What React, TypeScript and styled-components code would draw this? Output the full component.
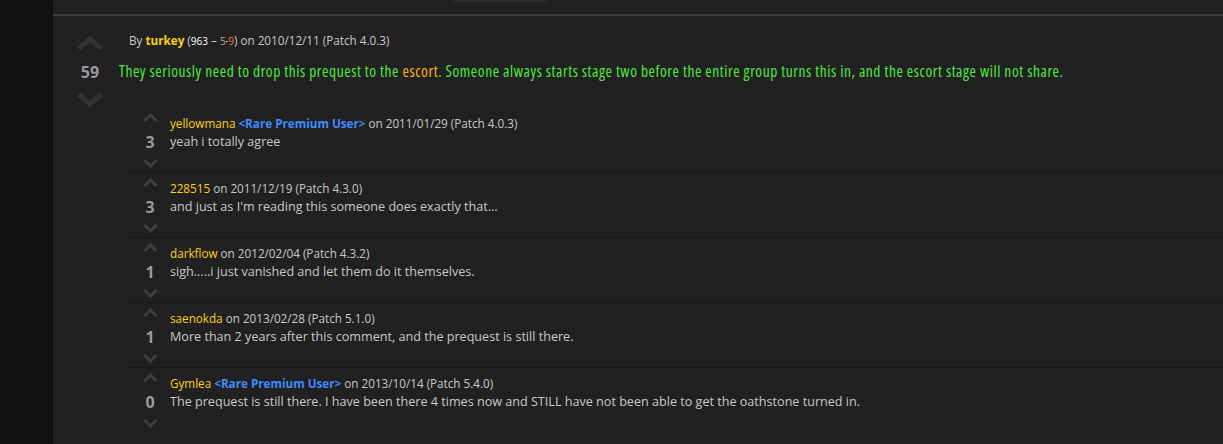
import React from "react";
import styled, { createGlobalStyle } from "styled-components";

const Global = createGlobalStyle`
  html, body { margin: 0; padding: 0; background: #212121; }
  body { font-family: "Open Sans", "Liberation Sans", sans-serif; }
  * { box-sizing: border-box; }
`;

const Page = styled.div`
  display: flex;
  width: 1223px;
  height: 444px;
  overflow: hidden;
`;

const SideStrip = styled.div`
  width: 53px;
  flex: none;
  background: #111111;
`;

const Main = styled.div`
  flex: 1;
  display: flex;
  flex-direction: column;
  background: #212121;
`;

const TopBar = styled.div`
  height: 16px;
  border-bottom: 2px solid #3e3e3e;
  padding-left: 400px;
`;

const TopTab = styled.div`
  width: 94px;
  height: 2px;
  background: #2b2b2b;
  border-radius: 0 0 3px 3px;
`;

const Comment = styled.div`
  display: grid;
  grid-template-columns: 66px 1fr;
  padding-top: 20px;
`;

const VoteCol = styled.div`
  display: flex;
  flex-direction: column;
  align-items: center;
  padding-left: 8px;
`;

const Score = styled.div<{ $big?: boolean }>`
  font-family: "Open Sans", sans-serif;
  font-weight: 700;
  color: #9a9a9a;
  font-size: 16px;
  line-height: 18px;
  margin: ${(p) => (p.$big ? "13px 0 12px" : "11px 0 8px")};
`;

const Chevron: React.FC<{ dir: "up" | "down"; big?: boolean }> = ({ dir, big }) => {
  const w = big ? 26 : 15;
  const h = big ? 14 : 9;
  const sw = big ? 5 : 3;
  const pts =
    dir === "up"
      ? `${sw / 2 + 1},${h - sw / 2 - 0.5} ${w / 2},${sw / 2 + 0.5} ${w - sw / 2 - 1},${h - sw / 2 - 0.5}`
      : `${sw / 2 + 1},${sw / 2 + 0.5} ${w / 2},${h - sw / 2 - 0.5} ${w - sw / 2 - 1},${sw / 2 + 0.5}`;
  return (
    <svg width={w} height={h} viewBox={`0 0 ${w} ${h}`} style={{ display: "block" }}>
      <polyline points={pts} fill="none" stroke={big ? "#333333" : "#3f3f3f"} strokeWidth={sw} strokeLinecap="square" />
    </svg>
  );
};

const Body = styled.div`
  display: flex;
  flex-direction: column;
`;

const Meta = styled.div`
  font-size: 11.7px;
  line-height: 16px;
  color: #c8c8c8;
  white-space: nowrap;
`;

const MainMeta = styled(Meta)`
  padding-left: 10px;
  margin-top: -4px;
`;

const User = styled.span<{ $bold?: boolean }>`
  color: #ffd100;
  font-weight: ${(p) => (p.$bold ? 700 : 400)};
`;

const Rep = styled.span`
  font-size: 10px;
  color: #ffffff;
`;

const RepScore = styled.span<{ $c: string }>`
  font-size: 10px;
  color: ${(p) => p.$c};
`;

const Premium = styled.span`
  color: #3d8bff;
  font-weight: 700;
`;

const MainText = styled.div`
  margin-top: 13px;
  font-size: 15.5px;
  line-height: 18px;
  color: #4ee83a;
  font-stretch: 85%;
  letter-spacing: 0.55px;
  white-space: nowrap;
`;

const Escort = styled.span`
  color: #ffb100;
`;

const Replies = styled.div`
  margin-left: 75px;
  margin-top: 1px;
  display: flex;
  flex-direction: column;
`;

const Reply = styled.div`
  display: grid;
  grid-template-columns: 42px 1fr;
  height: 65px;
  border-bottom: 1px solid #191919;
  &:last-child { border-bottom: none; }
`;

const ReplyVote = styled.div`
  display: flex;
  flex-direction: column;
  align-items: center;
  padding-top: 5px;
  padding-left: 2px;
`;

const ReplyBody = styled.div`
  padding-top: 7px;
`;

const ReplyText = styled.div`
  font-size: 12.6px;
  line-height: 18px;
  color: #c8c8c8;
  margin-top: 2px;
  white-space: nowrap;
`;

type R = { user: string; premium?: boolean; date: string; patch: string; score: number; text: string };

const replies: R[] = [
  { user: "yellowmana", premium: true, date: "2011/01/29", patch: "4.0.3", score: 3, text: "yeah i totally agree" },
  { user: "228515", date: "2011/12/19", patch: "4.3.0", score: 3, text: "and just as I'm reading this someone does exactly that..." },
  { user: "darkflow", date: "2012/02/04", patch: "4.3.2", score: 1, text: "sigh.....i just vanished and let them do it themselves." },
  { user: "saenokda", date: "2013/02/28", patch: "5.1.0", score: 1, text: "More than 2 years after this comment, and the prequest is still there." },
  { user: "Gymlea", premium: true, date: "2013/10/14", patch: "5.4.0", score: 0, text: "The prequest is still there. I have been there 4 times now and STILL have not been able to get the oathstone turned in." },
];

export default function App() {
  return (
    <Page>
      <Global />
      <SideStrip />
      <Main>
        <TopBar>
          <TopTab />
        </TopBar>
        <Comment>
          <VoteCol>
            <Chevron dir="up" big />
            <Score $big>59</Score>
            <Chevron dir="down" big />
          </VoteCol>
          <Body>
            <MainMeta>
              By <User $bold>turkey</User> (<Rep>963</Rep> – <RepScore $c="#c8a878">5</RepScore><Rep>·</Rep><RepScore $c="#f48022">9</RepScore>) on 2010/12/11 (Patch 4.0.3)
            </MainMeta>
            <MainText>
              They seriously need to drop this prequest to the <Escort>escort</Escort>. Someone always starts stage two before the entire group turns this in, and the escort stage will not share.
            </MainText>
          </Body>
        </Comment>
        <Replies>
          {replies.map((r, i) => (
            <Reply key={i}>
              <ReplyVote>
                <Chevron dir="up" />
                <Score>{r.score}</Score>
                <Chevron dir="down" />
              </ReplyVote>
              <ReplyBody>
                <Meta>
                  <User>{r.user}</User>
                  {r.premium && <Premium> &lt;Rare Premium User&gt;</Premium>} on {r.date} (Patch {r.patch})
                </Meta>
                <ReplyText>{r.text}</ReplyText>
              </ReplyBody>
            </Reply>
          ))}
        </Replies>
      </Main>
    </Page>
  );
}
